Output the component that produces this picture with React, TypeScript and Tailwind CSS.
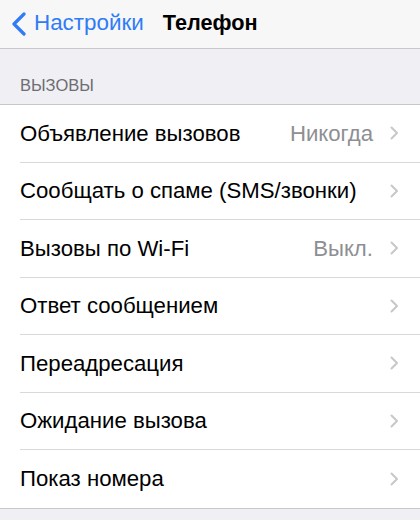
import React from "react";

const rows: { label: string; value?: string }[] = [
  { label: "Объявление вызовов", value: "Никогда" },
  { label: "Сообщать о спаме (SMS/звонки)" },
  { label: "Вызовы по Wi-Fi", value: "Выкл." },
  { label: "Ответ сообщением" },
  { label: "Переадресация" },
  { label: "Ожидание вызова" },
  { label: "Показ номера" },
];

function Chevron() {
  return (
    <svg width="9" height="14" viewBox="0 0 9 14" className="shrink-0">
      <path d="M1.5 1.5 L7 7 L1.5 12.5" fill="none" stroke="#c7c7cc" strokeWidth="2" strokeLinecap="round" strokeLinejoin="round" />
    </svg>
  );
}

export default function App() {
  return (
    <div className="w-[420px] h-[520px] bg-[#efeff4] overflow-hidden" style={{ fontFamily: '"Liberation Sans", Arial, sans-serif' }}>
      <div className="h-[49px] bg-[#f7f7f7] border-b border-[#c8c7cc] flex items-center pb-[2px]">
        <div className="flex items-center pl-[11px] text-[#2f7cf6]">
          <svg width="16" height="24" viewBox="0 0 16 24" className="mt-[1px]">
            <path d="M13 2 L3 12 L13 22" fill="none" stroke="#2f7cf6" strokeWidth="3.2" strokeLinecap="round" strokeLinejoin="round" />
          </svg>
          <span className="ml-[7px] text-[22.4px] leading-none">Настройки</span>
        </div>
        <span className="ml-[19px] text-[21.7px] font-bold text-black leading-none">Телефон</span>
      </div>
      <div className="h-[55px] flex items-end pb-[11px] pl-[20px]">
        <span className="text-[16.5px] text-[#6d6d72] leading-none">ВЫЗОВЫ</span>
      </div>
      <div className="bg-white border-t border-b border-[#c8c7cc]">
        {rows.map((r, i) => (
          <div key={i} className="pl-[20px]">
            <div className={`h-[57.5px] flex items-center pr-[21.5px] ${i < rows.length - 1 ? "border-b border-[#d9d9dd]" : ""}`}>
              <span className="flex-1 text-[22.2px] text-black whitespace-nowrap">{r.label}</span>
              {r.value && <span className="text-[22.2px] text-[#8e8e93] mr-[16.5px]">{r.value}</span>}
              <Chevron />
            </div>
          </div>
        ))}
      </div>
    </div>
  );
}
